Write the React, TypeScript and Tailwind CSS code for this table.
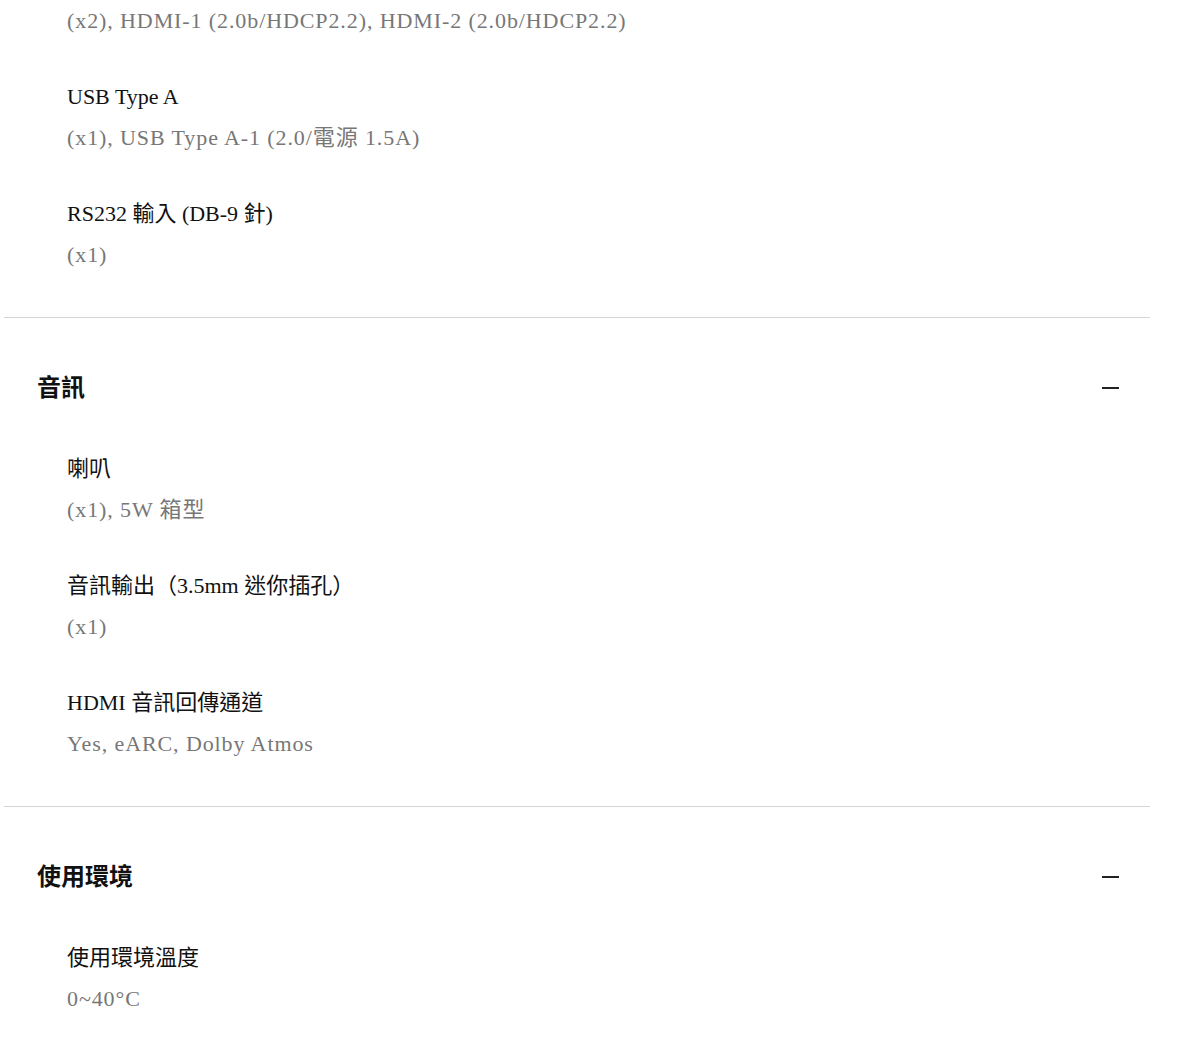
import React from "react";

interface SpecItem {
  label: string;
  value: string;
}

interface SpecSection {
  title: string;
  items: SpecItem[];
}

const serif = "font-['Liberation_Serif','Noto_Sans_CJK_TC',serif]";

const sections: SpecSection[] = [
  {
    title: "音訊",
    items: [
      { label: "喇叭", value: "(x1), 5W 箱型" },
      { label: "音訊輸出（3.5mm 迷你插孔）", value: "(x1)" },
      { label: "HDMI 音訊回傳通道", value: "Yes, eARC, Dolby Atmos" },
    ],
  },
  {
    title: "使用環境",
    items: [{ label: "使用環境溫度", value: "0~40°C" }],
  },
];

const topItems: SpecItem[] = [
  { label: "USB Type A", value: "(x1), USB Type A-1 (2.0/電源 1.5A)" },
  { label: "RS232 輸入 (DB-9 針)", value: "(x1)" },
];

const Value = ({ children }: { children: React.ReactNode }) => (
  <p className={`${serif} text-[22px] leading-[33px] tracking-[0.9px] text-[#777777]`}>
    {children}
  </p>
);

const Item = ({ item }: { item: SpecItem }) => (
  <div>
    <p className={`${serif} text-[22px] leading-[33px] text-[#111111]`}>
      {item.label}
    </p>
    <div className="mt-[8px]">
      <Value>{item.value}</Value>
    </div>
  </div>
);

const Section = ({ section }: { section: SpecSection }) => (
  <div className="border-t border-[#d5d5d5]">
    {/* Header */}
    <div className="flex items-center justify-between pl-[33px] pr-[31px] pt-[50px]">
      <h2 className="font-['Noto_Sans_CJK_TC',sans-serif] text-[24px] font-bold leading-[36px] text-[#111111]">
        {section.title}
      </h2>
      <span className="mt-[4px] block h-[2px] w-[17px] bg-[#222222]" />
    </div>

    {/* Items */}
    <div className="flex flex-col gap-[43px] pl-[63px] pt-[48px] pb-[46px]">
      {section.items.map((item) => (
        <Item key={item.label} item={item} />
      ))}
    </div>
  </div>
);

export default function App() {
  return (
    <div className="min-h-[1042px] bg-white">
      <div className="ml-[4px] w-[1146px]">
        {/* Tail of the previous section */}
        <div className="flex flex-col gap-[43px] pl-[63px] pt-[4px] pb-[46px]">
          <Value>(x2), HDMI-1 (2.0b/HDCP2.2), HDMI-2 (2.0b/HDCP2.2)</Value>
          {topItems.map((item) => (
            <Item key={item.label} item={item} />
          ))}
        </div>

        {sections.map((section) => (
          <Section key={section.title} section={section} />
        ))}
      </div>
    </div>
  );
}
